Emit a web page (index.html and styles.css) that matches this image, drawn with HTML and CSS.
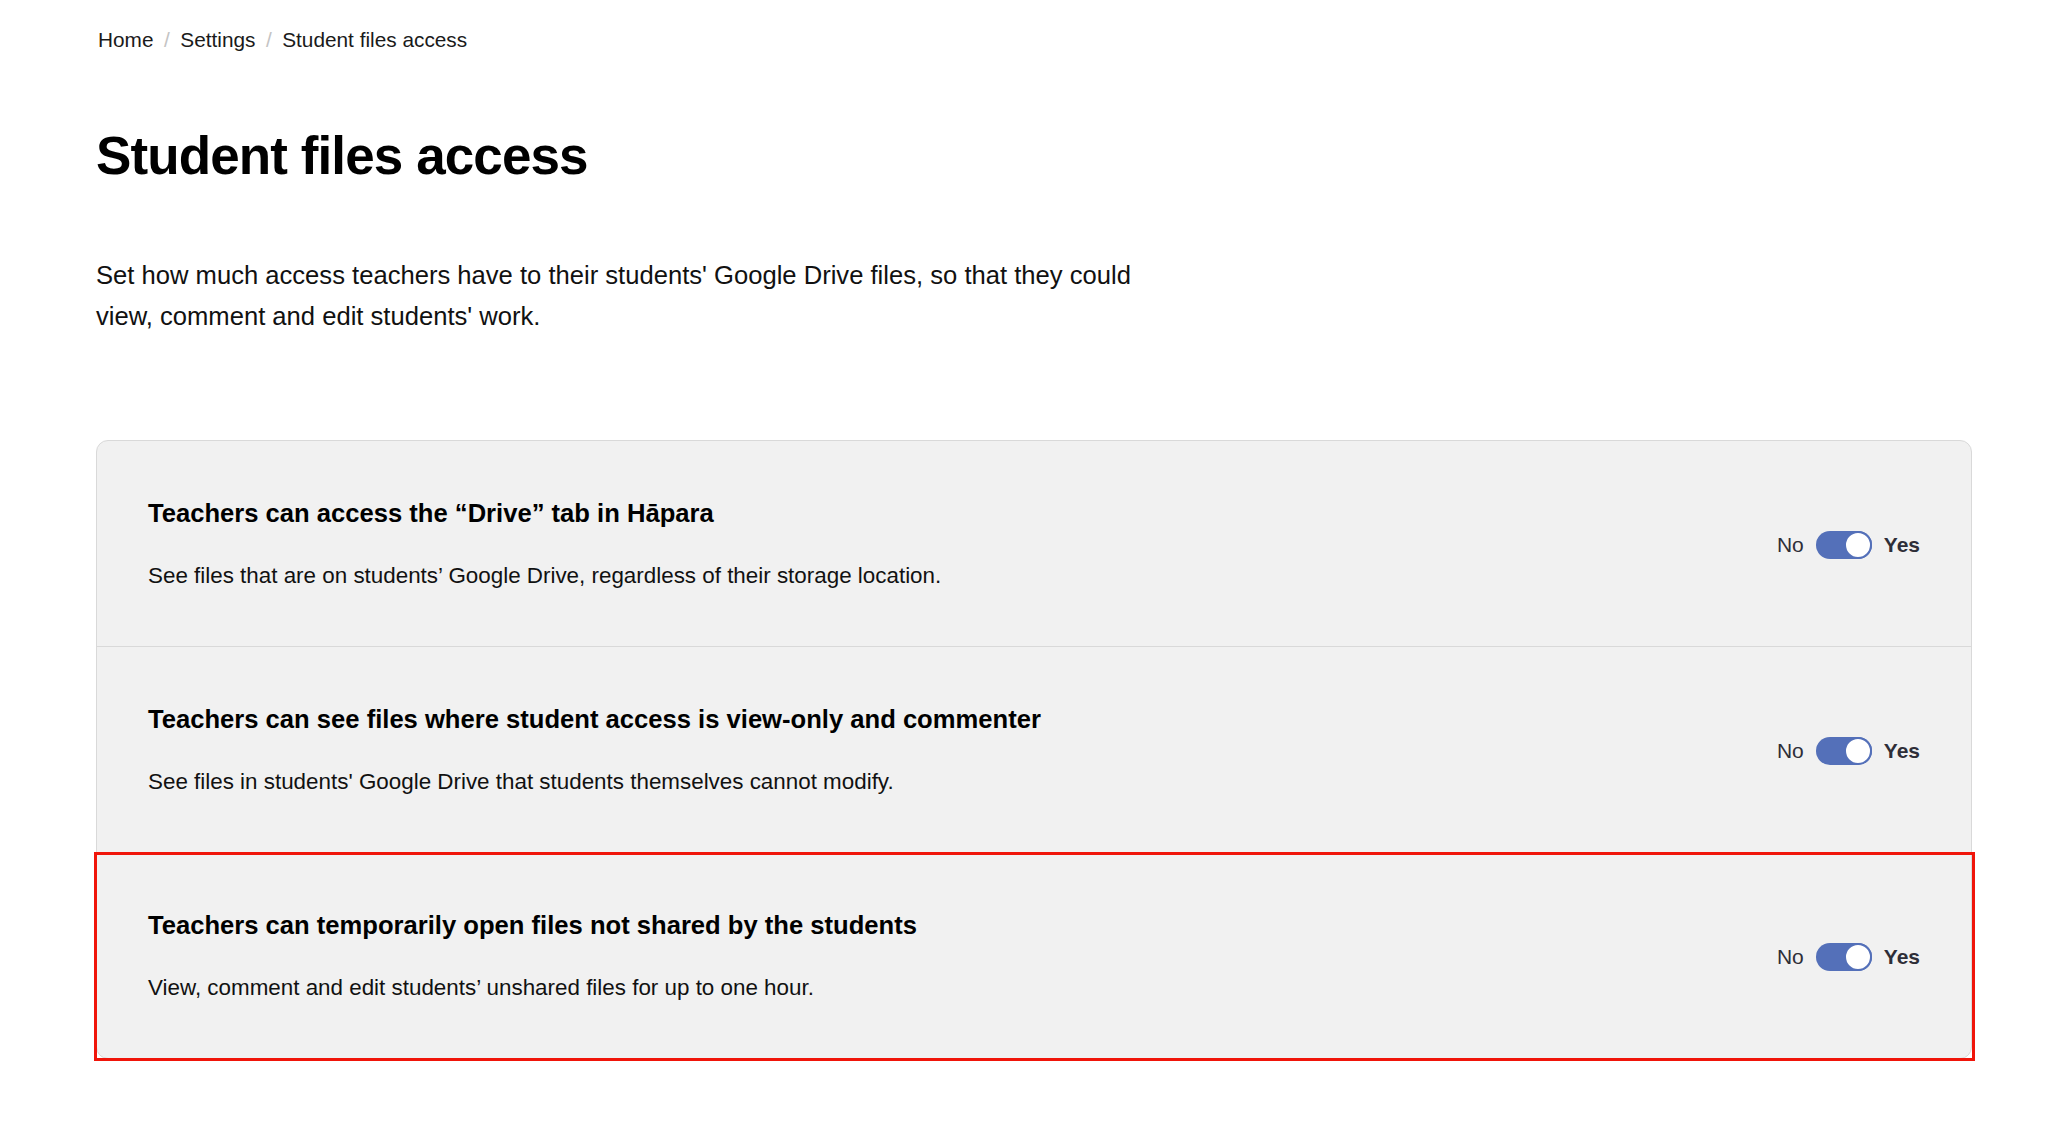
FILE: index.html
```html
<!DOCTYPE html>
<html lang="en">
<head>
	<meta charset="UTF-8">
	<title>Student files access</title>
	<link rel="stylesheet" href="styles.css">
</head>
<body>
	<div id="page">
		<ul id="crumbs">
			<li><a href="">Home</a></li>
			<li class="sep">/</li>
			<li><a href="">Settings</a></li>
			<li class="sep">/</li>
			<li>Student files access</li>
		</ul>

		<h1 id="title">Student files access</h1>

		<p id="intro">Set how much access teachers have to their students' Google Drive files, so that they could view, comment and edit students' work.</p>

		<div id="settings">
			<div class="row">
				<div class="text">
					<h2>Teachers can access the “Drive” tab in Hāpara</h2>
					<p>See files that are on students’ Google Drive, regardless of their storage location.</p>
				</div>
				<div class="switch">
					<span class="no">No</span>
					<span class="toggle on"><span class="knob"></span></span>
					<span class="yes">Yes</span>
				</div>
			</div>
			<div class="row">
				<div class="text">
					<h2>Teachers can see files where student access is view-only and commenter</h2>
					<p>See files in students' Google Drive that students themselves cannot modify.</p>
				</div>
				<div class="switch">
					<span class="no">No</span>
					<span class="toggle on"><span class="knob"></span></span>
					<span class="yes">Yes</span>
				</div>
			</div>
			<div class="row marked">
				<div class="text">
					<h2>Teachers can temporarily open files not shared by the students</h2>
					<p>View, comment and edit students’ unshared files for up to one hour.</p>
				</div>
				<div class="switch">
					<span class="no">No</span>
					<span class="toggle on"><span class="knob"></span></span>
					<span class="yes">Yes</span>
				</div>
			</div>
		</div>
	</div>
</body>
</html>
```

FILE: styles.css
```css
*{
	margin: 0;
	padding: 0;
	box-sizing: border-box;
}
body{
	font-family: "Liberation Sans", Arial, sans-serif;
	color: #111;
	background: #fff;
}
a{
	text-decoration: none;
	color: inherit;
}
ul{
	list-style: none;
}
#page{
	padding: 27px 82px 60px 96px;
}
#crumbs{
	display: flex;
	gap: 10.5px;
	padding-left: 2px;
	font-size: 20.8px;
	line-height: 26px;
	color: #1a1a1a;
}
#crumbs .sep{
	color: #c4c4c4;
}
#title{
	margin-top: 71px;
	font-size: 53px;
	line-height: 64px;
	font-weight: bold;
	letter-spacing: -0.9px;
	color: #000;
}
#intro{
	margin-top: 67px;
	max-width: 1080px;
	font-size: 25.6px;
	line-height: 41px;
	color: #111;
}
#settings{
	margin-top: 103px;
	background: #f1f1f1;
	border: 1px solid #d9d9d9;
	border-radius: 12px;
}
.row{
	display: flex;
	align-items: center;
	justify-content: space-between;
	padding: 57px 51px 55px 51px;
	border-top: 1px solid #d9d9d9;
	position: relative;
}
.row:first-child{
	border-top: none;
}
.row.marked::after{
	content: "";
	position: absolute;
	left: -3px;
	right: -4px;
	top: -1px;
	bottom: -3px;
	border: 3px solid #f0150a;
}
.text h2{
	font-size: 25.6px;
	line-height: 30px;
	font-weight: bold;
	color: #000;
}
.text p{
	margin-top: 33px;
	font-size: 22.4px;
	line-height: 30px;
	color: #111;
}
.switch{
	display: flex;
	align-items: center;
	gap: 12px;
	font-size: 21px;
	color: #2e2e38;
}
.switch .yes{
	font-weight: bold;
}
.toggle{
	width: 56px;
	height: 28px;
	border-radius: 14px;
	background: #5470b9;
	position: relative;
	display: block;
}
.knob{
	position: absolute;
	top: 0;
	right: 0;
	width: 28px;
	height: 28px;
	border-radius: 50%;
	background: #fff;
	border: 2px solid #5470b9;
}
```
